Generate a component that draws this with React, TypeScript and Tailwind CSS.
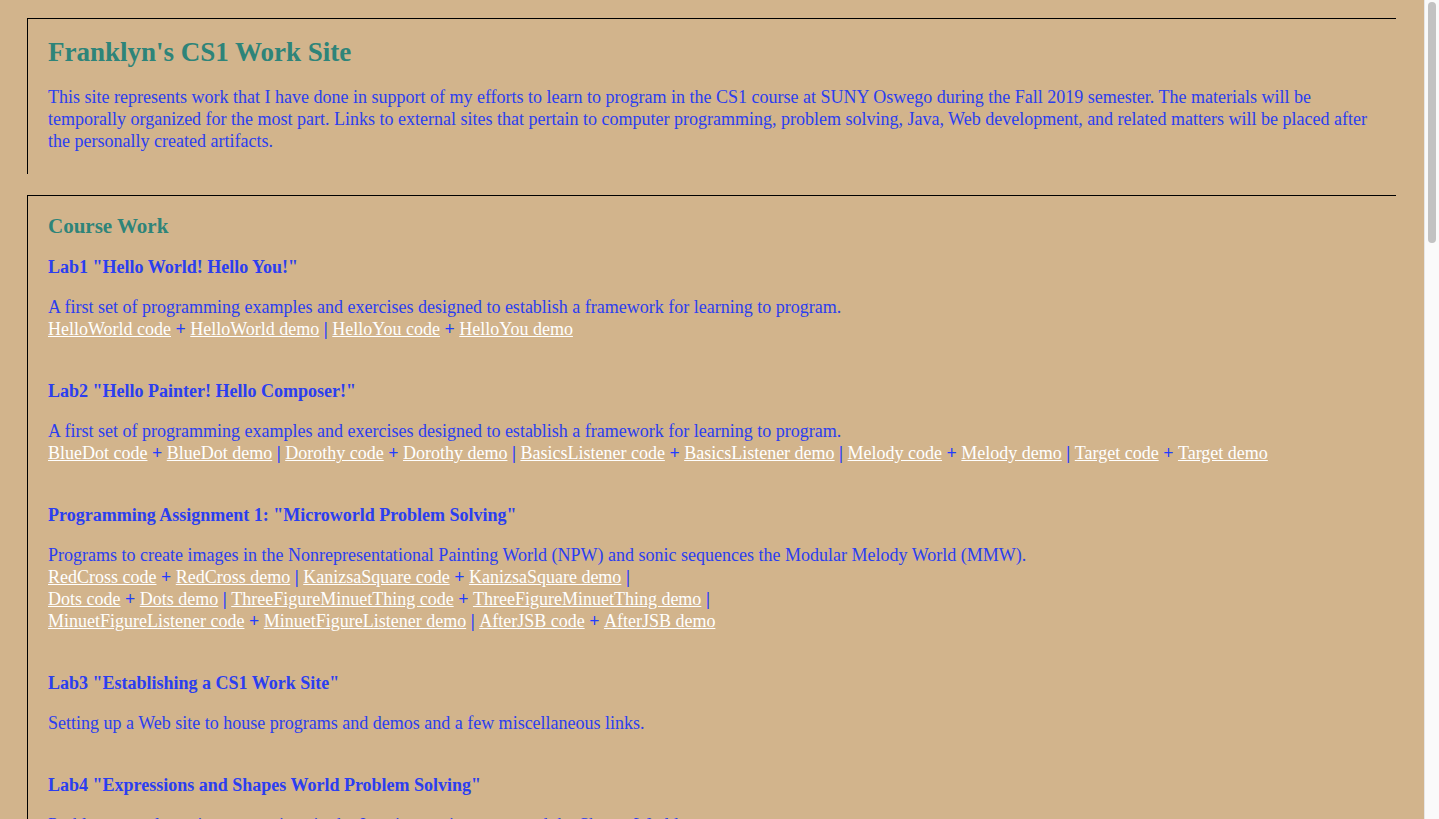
import React from "react";

type LinkItem = { label: string; sep?: "+" | "|" };

const Sep = ({ s }: { s: string }) => (
  <span className="font-bold text-[#1f3cff]"> {s} </span>
);

const LinkLine = ({ items }: { items: LinkItem[] }) => (
  <>
    {items.map((it, i) => (
      <React.Fragment key={i}>
        <a href="#" className="text-white underline">
          {it.label}
        </a>
        {it.sep ? <Sep s={it.sep} /> : null}
      </React.Fragment>
    ))}
  </>
);

const Section = ({
  title,
  desc,
  lines,
}: {
  title: string;
  desc: string;
  lines: LinkItem[][];
}) => (
  <div className="flex flex-col gap-[18px]">
    <h4 className="text-[18px] leading-[22px] font-bold text-[#2b3ef0]">{title}</h4>
    <p className="text-[18px] leading-[22px] text-[#2b3ef0]">
      {desc}
      {lines.map((l, i) => (
        <React.Fragment key={i}>
          <br />
          <LinkLine items={l} />
        </React.Fragment>
      ))}
    </p>
  </div>
);

export default function App() {
  return (
    <div
      className="h-screen flex bg-[#d2b48c] overflow-hidden"
      style={{ fontFamily: '"Liberation Serif", "Times New Roman", serif' }}
    >
      <div className="flex-1 min-w-0 overflow-hidden pt-[18px] pb-[40px]">
        <div className="ml-[27px] mr-[28px] border-t border-l border-black pl-[20px] pr-[20px] pt-[18px] pb-[22px] flex flex-col gap-[18px]">
          <h1 className="text-[27px] leading-[31px] font-bold text-[#2e8479]">
            Franklyn's CS1 Work Site
          </h1>
          <p className="text-[18px] leading-[22px] text-[#2b3ef0]">
            This site represents work that I have done in support of my efforts to learn to program
            in the CS1 course at SUNY Oswego during the Fall 2019 semester. The materials will be
            temporally organized for the most part. Links to external sites that pertain to computer
            programming, problem solving, Java, Web development, and related matters will be placed
            after the personally created artifacts.
          </p>
        </div>

        <div className="mt-[21px] ml-[27px] mr-[28px] border-t border-l border-black pl-[20px] pr-[20px] pt-[18px] pb-[22px] flex flex-col">
          <h2 className="text-[21px] leading-[24px] font-bold text-[#2e8479]">Course Work</h2>
          <div className="mt-[18px] flex flex-col gap-[40px]">
            <Section
              title={'Lab1 "Hello World! Hello You!"'}
              desc="A first set of programming examples and exercises designed to establish a framework for learning to program."
              lines={[
                [
                  { label: "HelloWorld code", sep: "+" },
                  { label: "HelloWorld demo", sep: "|" },
                  { label: "HelloYou code", sep: "+" },
                  { label: "HelloYou demo" },
                ],
              ]}
            />
            <Section
              title={'Lab2 "Hello Painter! Hello Composer!"'}
              desc="A first set of programming examples and exercises designed to establish a framework for learning to program."
              lines={[
                [
                  { label: "BlueDot code", sep: "+" },
                  { label: "BlueDot demo", sep: "|" },
                  { label: "Dorothy code", sep: "+" },
                  { label: "Dorothy demo", sep: "|" },
                  { label: "BasicsListener code", sep: "+" },
                  { label: "BasicsListener demo", sep: "|" },
                  { label: "Melody code", sep: "+" },
                  { label: "Melody demo", sep: "|" },
                  { label: "Target code", sep: "+" },
                  { label: "Target demo" },
                ],
              ]}
            />
            <Section
              title={'Programming Assignment 1: "Microworld Problem Solving"'}
              desc="Programs to create images in the Nonrepresentational Painting World (NPW) and sonic sequences the Modular Melody World (MMW)."
              lines={[
                [
                  { label: "RedCross code", sep: "+" },
                  { label: "RedCross demo", sep: "|" },
                  { label: "KanizsaSquare code", sep: "+" },
                  { label: "KanizsaSquare demo", sep: "|" },
                ],
                [
                  { label: "Dots code", sep: "+" },
                  { label: "Dots demo", sep: "|" },
                  { label: "ThreeFigureMinuetThing code", sep: "+" },
                  { label: "ThreeFigureMinuetThing demo", sep: "|" },
                ],
                [
                  { label: "MinuetFigureListener code", sep: "+" },
                  { label: "MinuetFigureListener demo", sep: "|" },
                  { label: "AfterJSB code", sep: "+" },
                  { label: "AfterJSB demo" },
                ],
              ]}
            />
            <Section
              title={'Lab3 "Establishing a CS1 Work Site"'}
              desc="Setting up a Web site to house programs and demos and a few miscellaneous links."
              lines={[]}
            />
            <Section
              title={'Lab4 "Expressions and Shapes World Problem Solving"'}
              desc="Problems to solve using expressions in the Java interactions pane and the Shapes World."
              lines={[
                [
                  { label: "ExpressionsThing code", sep: "+" },
                  { label: "ExpressionsThing demo", sep: "|" },
                  { label: "ShapesThing code", sep: "+" },
                  { label: "ShapesThing demo" },
                ],
              ]}
            />
          </div>
        </div>
      </div>

      <div className="w-[15px] shrink-0 h-full bg-[#fafafa] border-l border-[#e6e6e6] flex flex-col items-center pt-[2px]">
        <div className="w-[8px] h-[241px] rounded-full bg-[#c2c2c2]" />
      </div>
    </div>
  );
}
